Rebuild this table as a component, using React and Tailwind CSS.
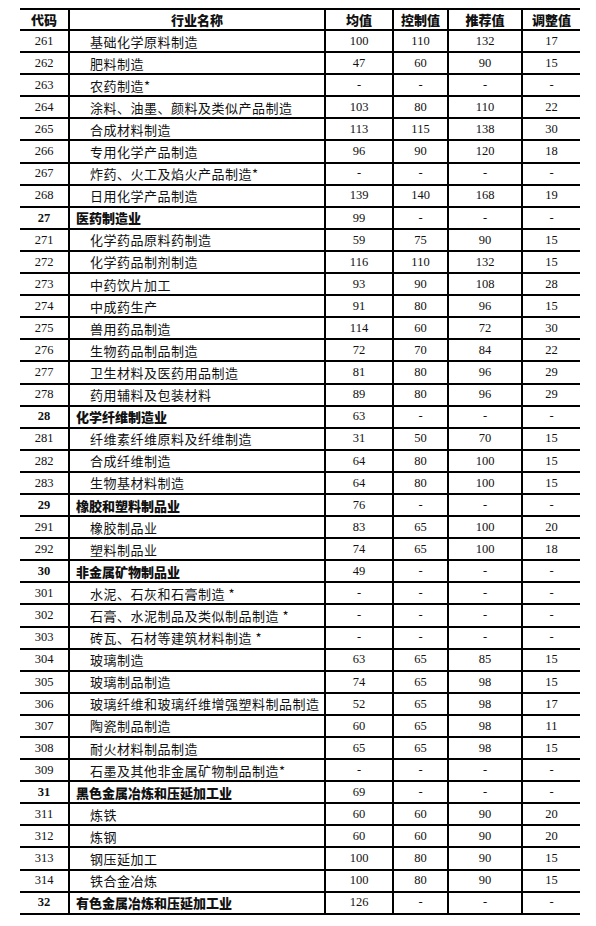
import React from "react";

// 行业能耗指标表
const rows = [
  ["261", "基础化学原料制造", "100", "110", "132", "17"],
  ["262", "肥料制造", "47", "60", "90", "15"],
  ["263", "农药制造*", "-", "-", "-", "-"],
  ["264", "涂料、油墨、颜料及类似产品制造", "103", "80", "110", "22"],
  ["265", "合成材料制造", "113", "115", "138", "30"],
  ["266", "专用化学产品制造", "96", "90", "120", "18"],
  ["267", "炸药、火工及焰火产品制造*", "-", "-", "-", "-"],
  ["268", "日用化学产品制造", "139", "140", "168", "19"],
  ["27", "医药制造业", "99", "-", "-", "-", true],
  ["271", "化学药品原料药制造", "59", "75", "90", "15"],
  ["272", "化学药品制剂制造", "116", "110", "132", "15"],
  ["273", "中药饮片加工", "93", "90", "108", "28"],
  ["274", "中成药生产", "91", "80", "96", "15"],
  ["275", "兽用药品制造", "114", "60", "72", "30"],
  ["276", "生物药品制品制造", "72", "70", "84", "22"],
  ["277", "卫生材料及医药用品制造", "81", "80", "96", "29"],
  ["278", "药用辅料及包装材料", "89", "80", "96", "29"],
  ["28", "化学纤维制造业", "63", "-", "-", "-", true],
  ["281", "纤维素纤维原料及纤维制造", "31", "50", "70", "15"],
  ["282", "合成纤维制造", "64", "80", "100", "15"],
  ["283", "生物基材料制造", "64", "80", "100", "15"],
  ["29", "橡胶和塑料制品业", "76", "-", "-", "-", true],
  ["291", "橡胶制品业", "83", "65", "100", "20"],
  ["292", "塑料制品业", "74", "65", "100", "18"],
  ["30", "非金属矿物制品业", "49", "-", "-", "-", true],
  ["301", "水泥、石灰和石膏制造 *", "-", "-", "-", "-"],
  ["302", "石膏、水泥制品及类似制品制造 *", "-", "-", "-", "-"],
  ["303", "砖瓦、石材等建筑材料制造 *", "-", "-", "-", "-"],
  ["304", "玻璃制造", "63", "65", "85", "15"],
  ["305", "玻璃制品制造", "74", "65", "98", "15"],
  ["306", "玻璃纤维和玻璃纤维增强塑料制品制造", "52", "65", "98", "17"],
  ["307", "陶瓷制品制造", "60", "65", "98", "11"],
  ["308", "耐火材料制品制造", "65", "65", "98", "15"],
  ["309", "石墨及其他非金属矿物制品制造*", "-", "-", "-", "-"],
  ["31", "黑色金属冶炼和压延加工业", "69", "-", "-", "-", true],
  ["311", "炼铁", "60", "60", "90", "20"],
  ["312", "炼钢", "60", "60", "90", "20"],
  ["313", "钢压延加工", "100", "80", "90", "15"],
  ["314", "铁合金冶炼", "100", "80", "90", "15"],
  ["32", "有色金属冶炼和压延加工业", "126", "-", "-", "-", true],
];

const headers = ["代码", "行业名称", "均值", "控制值", "推荐值", "调整值"];

const App = () => {
  return (
    <div className="bg-white w-[596px] h-[926px] px-[20px] pt-[8px] font-['Liberation_Serif','Noto_Sans_CJK_SC',serif] text-[#111]">
      <table className="w-[560px] table-fixed border-collapse border-t-2 border-black">
        <colgroup>
          <col className="w-[49px]" />
          <col className="w-[256px]" />
          <col className="w-[68px]" />
          <col className="w-[55px]" />
          <col className="w-[74px]" />
          <col className="w-[58px]" />
        </colgroup>
        <thead>
          <tr className="h-[21px] border-b-2 border-black">
            {headers.map((h, i) => (
              <th
                key={h}
                className={`p-0 text-center text-[13px] font-black font-['Noto_Sans_CJK_SC',sans-serif] leading-none ${i > 0 ? "border-l-2 border-black" : ""}`}
              >
                {h}
              </th>
            ))}
          </tr>
        </thead>
        <tbody>
          {rows.map((r) => {
            const cat = r[6];
            return (
              <tr key={r[0]} className="h-[22.1px] border-b-2 border-black">
                <td className={`p-0 text-center text-[12.5px] leading-none ${cat ? "font-bold" : ""}`}>{r[0]}</td>
                <td
                  className={`p-0 border-l-2 border-black text-left text-[13px] leading-none whitespace-nowrap overflow-hidden font-['Noto_Sans_CJK_SC',sans-serif] ${
                    cat ? "pl-[6px] font-black" : "pl-[20px] tracking-[0.5px] font-normal"
                  }`}
                >
                  {r[1]}
                </td>
                {r.slice(2, 6).map((v, i) => (
                  <td key={i} className="p-0 border-l-2 border-black text-center text-[12.5px] leading-none">
                    {v}
                  </td>
                ))}
              </tr>
            );
          })}
        </tbody>
      </table>
    </div>
  );
};

export default App;
